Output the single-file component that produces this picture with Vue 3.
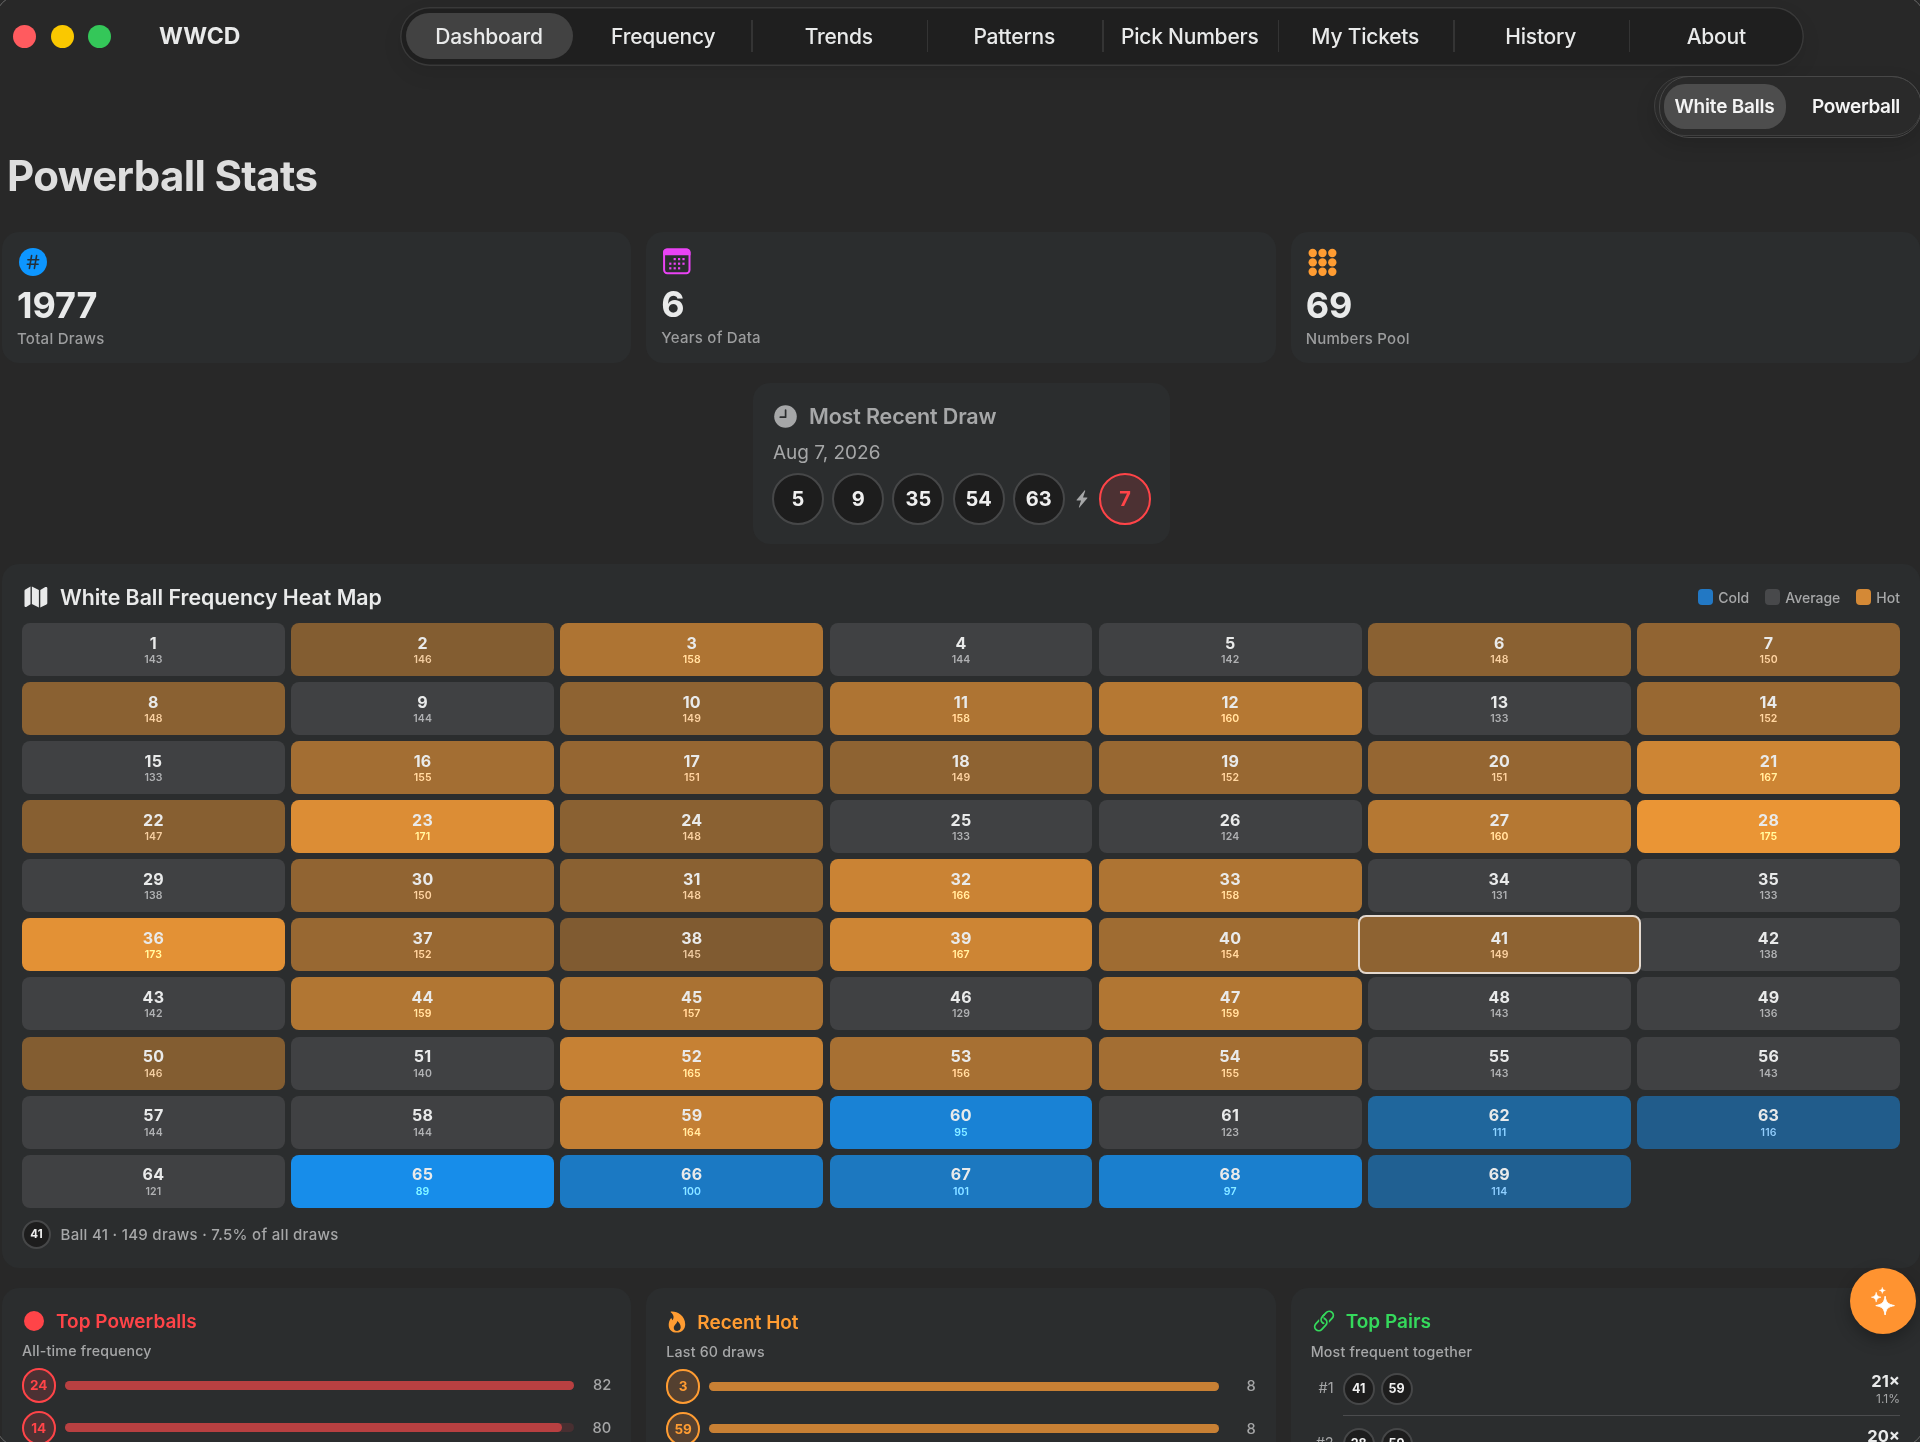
<script setup>
import { computed, ref } from "vue"

const tabs = [
  "Dashboard",
  "Frequency",
  "Trends",
  "Patterns",
  "Pick Numbers",
  "My Tickets",
  "History",
  "About"
]

const activeTab = ref("Dashboard")
const pool = ref("White Balls")
const selected = ref(41)

const totalDraws = 1977
const hotFrom = 145
const coldTo = 116

const cardRgb = [43, 45, 46]
const hotRgb = [255, 160, 54]
const coldRgb = [21, 152, 255]

// draws per white ball, 1 to 69
const counts = [
  143, 146, 158, 144, 142, 148, 150,
  148, 144, 149, 158, 160, 133, 152,
  133, 155, 151, 149, 152, 151, 167,
  147, 171, 148, 133, 124, 160, 175,
  138, 150, 148, 166, 158, 131, 133,
  173, 152, 145, 167, 154, 149, 138,
  142, 159, 157, 129, 159, 143, 136,
  146, 140, 165, 156, 155, 143, 143,
  144, 144, 164, 95, 123, 111, 116,
  121, 89, 100, 101, 97, 114
]

const cells = counts.map((count, i) => ({
  number: i + 1,
  count,
  color: cellColor(count)
}))

function mix(rgb, amount) {
  const parts = rgb.map((value, i) =>
    Math.round(cardRgb[i] + (value - cardRgb[i]) * amount)
  )

  return `rgb(${parts.join(", ")})`
}

function cellColor(count) {
  if (count >= hotFrom) {
    return mix(hotRgb, 0.9 - (175 - count) * 0.0167)
  }

  if (count <= coldTo) {
    return mix(coldRgb, 0.9 - (count - 89) * 0.0169)
  }

  return "#404143"
}

const selectedText = computed(() => {
  const count = counts[selected.value - 1]
  const share = (count / totalDraws * 100).toFixed(1)

  return `Ball ${selected.value} · ${count} draws · ${share}% of all draws`
})

const recentBalls = [5, 9, 35, 54, 63]

const topPowerballs = [
  { number: 24, count: 82 },
  { number: 14, count: 80 }
]

const recentHot = [
  { number: 3, count: 8 },
  { number: 59, count: 8 }
]

const topPairs = [
  { rank: 1, balls: [41, 59], times: 21, share: "1.1%" },
  { rank: 2, balls: [28, 59], times: 20, share: "" }
]
</script>

<template>
  <div class="window">

    <header class="titlebar">
      <div class="lights">
        <span class="light close"></span>
        <span class="light minimize"></span>
        <span class="light zoom"></span>
      </div>

      <div class="app-name">WWCD</div>

      <nav class="tabs">
        <button
          v-for="tab in tabs"
          :key="tab"
          class="tab"
          :class="{ active: tab === activeTab }"
          type="button"
          @click="activeTab = tab"
        >
          <span>{{ tab }}</span>
        </button>
      </nav>
    </header>

    <div class="toolbar">
      <div class="pool-switch">
        <button
          v-for="name in ['White Balls', 'Powerball']"
          :key="name"
          class="pool"
          :class="{ active: name === pool }"
          type="button"
          @click="pool = name"
        >
          {{ name }}
        </button>
      </div>
    </div>

    <h1>Powerball Stats</h1>

    <section class="columns stats">
      <div class="card stat">
        <svg width="28" height="28" viewBox="0 0 28 28">
          <circle cx="14" cy="14" r="14" fill="#0d96ff" />
          <path
            d="M12.6 7.6 10.4 20.4M17.6 7.6l-2.2 12.8M8.9 11.8h10.8M8.3 16.3h10.8"
            fill="none"
            stroke="#24303a"
            stroke-width="1.6"
            stroke-linecap="round"
          />
        </svg>
        <strong>1977</strong>
        <span>Total Draws</span>
      </div>

      <div class="card stat years">
        <svg width="28" height="28" viewBox="0 0 28 28">
          <rect x="1.1" y="2.6" width="25.4" height="23.6" rx="3.2" fill="none" stroke="#ea43f5" stroke-width="2" />
          <path d="M.1 8.200V5.200C.1 2.800 1.900 1.600 4.100 1.600h19.400c2.200 0 4 1.200 4 3.600v3z" fill="#ea43f5" />
          <g fill="#ea43f5">
            <rect x="10.600" y="11" width="2.200" height="2.200" />
            <rect x="15" y="11" width="2.200" height="2.200" />
            <rect x="19.400" y="11" width="2.200" height="2.200" />
            <rect x="6.200" y="15.600" width="2.200" height="2.200" />
            <rect x="10.600" y="15.600" width="2.200" height="2.200" />
            <rect x="15" y="15.600" width="2.200" height="2.200" />
            <rect x="19.400" y="15.600" width="2.200" height="2.200" />
            <rect x="6.200" y="20.200" width="2.200" height="2.200" />
            <rect x="10.600" y="20.200" width="2.200" height="2.200" />
            <rect x="15" y="20.200" width="2.200" height="2.200" />
          </g>
        </svg>
        <strong>6</strong>
        <span>Years of Data</span>
      </div>

      <div class="card stat">
        <svg width="29" height="28" viewBox="0 0 29 28" fill="#ff9c32">
          <template v-for="row in 3" :key="row">
            <circle
              v-for="col in 3"
              :key="col"
              :cx="col * 9.800 - 5.100"
              :cy="row * 9.400 - 4.400"
              r="4.200"
            />
          </template>
        </svg>
        <strong>69</strong>
        <span>Numbers Pool</span>
      </div>
    </section>

    <section class="card recent">
      <div class="recent-title">
        <svg width="23" height="23" viewBox="0 0 23 23">
          <circle cx="11.500" cy="11.500" r="11.300" fill="#a6a7a8" />
          <path d="M11.600 5v7.200H6.300" fill="none" stroke="#2b2d2e" stroke-width="1.700" stroke-linecap="round" stroke-linejoin="round" />
        </svg>
        Most Recent Draw
      </div>
      <div class="recent-date">Aug 7, 2026</div>
      <div class="recent-balls">
        <span v-for="ball in recentBalls" :key="ball" class="ball">{{ ball }}</span>
        <svg class="bolt" width="12" height="18" viewBox="0 0 12 18">
          <path d="M8.600.4.700 9.700c-.3.400-.1.800.4.800h4L2.900 17.400c-.1.500.3.600.6.300l7.900-9.500c.3-.4.100-.8-.4-.8H7.100L9.300.8c.1-.5-.4-.7-.7-.4z" fill="#a6a7a8" />
        </svg>
        <span class="ball power">7</span>
      </div>
    </section>

    <section class="card heat">
      <div class="heat-head">
        <svg width="24" height="22" viewBox="0 0 24 22" fill="#e9eaea">
          <path d="M.5 4.900c0-.7.300-1.200.9-1.500L6.500.6v17.600l-4.300 2.700c-.9.500-1.700.1-1.700-.8z" />
          <path d="m7.900.6 7 3.500v17.300l-7-3.300z" />
          <path d="m16.300 4 5-2.900c1-.5 2-.1 2 1v15c0 .7-.3 1.200-.9 1.500l-6.100 3z" />
        </svg>
        <h2>White Ball Frequency Heat Map</h2>
        <div class="legend">
          <span><i class="cold"></i>Cold</span>
          <span><i class="average"></i>Average</span>
          <span><i class="hot"></i>Hot</span>
        </div>
      </div>

      <div class="heat-grid">
        <div
          v-for="cell in cells"
          :key="cell.number"
          class="cell"
          :class="{ selected: cell.number === selected }"
          :style="{ backgroundColor: cell.color }"
          @click="selected = cell.number"
        >
          <b>{{ cell.number }}</b>
          <small>{{ cell.count }}</small>
        </div>
      </div>

      <div class="heat-foot">
        <span class="ball tiny">{{ selected }}</span>
        {{ selectedText }}
      </div>
    </section>

    <section class="columns lists">
      <div class="card list red">
        <div class="list-title">
          <span class="dot"></span>
          Top Powerballs
        </div>
        <div class="list-sub">All-time frequency</div>
        <div v-for="row in topPowerballs" :key="row.number" class="bar-row">
          <span class="ball power">{{ row.number }}</span>
          <div class="track">
            <div class="fill" :style="{ width: row.count / 82 * 100 + '%' }"></div>
          </div>
          <span class="value">{{ row.count }}</span>
        </div>
      </div>

      <div class="card list orange">
        <div class="list-title">
          <svg width="18" height="22" viewBox="0 0 18 22">
            <path
              fill-rule="evenodd"
              d="M3.300.6C9 .2 17.200 4.600 17.200 13.200c0 5-3.300 8.400-8.300 8.400C4 21.600.7 18.500.7 13.900c0-2.600.9-4.700 2.100-6.300.3-.4.700-.3.900.1l.8 1.600C6.400 6.900 5.700 3.600 3 1.600c-.5-.4-.3-1 .3-1zM9.100 10c.3 2.500-3.300 4-3.300 6.900 0 1.800 1.400 3 3.300 3 2.100 0 3.600-1.400 3.600-3.600 0-2.400-1.400-5-3.600-6.300z"
              fill="#ff9c32"
            />
          </svg>
          Recent Hot
        </div>
        <div class="list-sub">Last 60 draws</div>
        <div v-for="row in recentHot" :key="row.number" class="bar-row">
          <span class="ball warm">{{ row.number }}</span>
          <div class="track">
            <div class="fill" :style="{ width: row.count / 8 * 100 + '%' }"></div>
          </div>
          <span class="value">{{ row.count }}</span>
        </div>
      </div>

      <div class="card list green">
        <div class="list-title">
          <svg width="22" height="22" viewBox="0 0 22 22" fill="none" stroke-width="1.800">
            <defs>
              <clipPath id="link-over">
                <path d="M0 0h22L9.500 12.500 0 22z" />
              </clipPath>
            </defs>
            <g transform="rotate(-47 11 11)">
              <rect x="8.700" y="6.900" width="14" height="8.200" rx="4.100" stroke="#35d95c" />
              <rect x="-.7" y="6.900" width="14" height="8.200" rx="4.100" stroke="#2b2d2e" stroke-width="4.200" />
              <rect x="-.7" y="6.900" width="14" height="8.200" rx="4.100" stroke="#35d95c" />
              <path d="M12.800 6.900c-2.300 0-4.100 1.800-4.100 4.100" stroke="#2b2d2e" stroke-width="4" />
              <path d="M8.700 11c0-2.300 1.800-4.100 4.100-4.100h3" stroke="#35d95c" stroke-linecap="round" />
            </g>
          </svg>
          Top Pairs
        </div>
        <div class="list-sub">Most frequent together</div>
        <div v-for="pair in topPairs" :key="pair.rank" class="pair-row">
          <span class="rank">#{{ pair.rank }}</span>
          <div class="pair-body">
            <span v-for="ball in pair.balls" :key="ball" class="ball">{{ ball }}</span>
            <div class="pair-count">
              <b>{{ pair.times }}×</b>
              <small>{{ pair.share }}</small>
            </div>
          </div>
        </div>
      </div>
    </section>

    <button class="assistant" type="button" aria-label="Assistant">
      <svg width="24" height="29" viewBox="0 0 24 29" fill="#fff">
        <path d="M14.100 9.200c1 6.300 2.700 8 9.300 9.400-6.600 1.300-8.300 3-9.300 9.400-1-6.400-2.700-8.100-9.300-9.400 6.600-1.400 8.300-3.100 9.300-9.400z" stroke="#fff" stroke-width="1" stroke-linejoin="round" />
        <path d="M5.200 5.300c.6 3.300 1.500 4.200 4.800 4.900-3.300.7-4.200 1.600-4.800 4.900C4.600 11.800 3.700 10.900.4 10.200c3.300-.7 4.200-1.600 4.800-4.900z" stroke="#fff" stroke-width=".6" stroke-linejoin="round" />
        <path d="M11.300.3c.4 2.100 1 2.700 3.100 3.100-2.100.4-2.700 1-3.100 3.100-.4-2.100-1-2.700-3.100-3.100 2.100-.4 2.700-1 3.100-3.100z" stroke="#fff" stroke-width=".4" stroke-linejoin="round" />
      </svg>
    </button>

    <div class="window-edge"></div>
  </div>
</template>

<style>
body {
  margin: 0;

  background: #282828;
}
</style>

<style scoped>
.window {
  position: relative;

  width: 1920px;
  height: 1442px;

  overflow: hidden;

  background: #282828;

  color: #e9eaea;

  font-family: Inter, "Liberation Sans", sans-serif;
}

.window * {
  box-sizing: border-box;
}

button {
  padding: 0;

  border: none;

  background: none;

  color: inherit;

  font: inherit;
}

/* TITLEBAR */

.titlebar {
  display: flex;
  align-items: center;

  height: 72px;

  padding-left: 13px;
}

.lights {
  display: flex;

  gap: 14.5px;
}

.light {
  width: 23px;
  height: 23px;

  border-radius: 50%;
}

.light.close {
  background: #ff5b5f;
}

.light.minimize {
  background: #fac800;
}

.light.zoom {
  background: #34c759;
}

.app-name {
  width: 241px;

  margin-left: 48px;

  font-size: 23px;
  font-weight: 680;
}

.tabs {
  display: grid;
  grid-template-columns: repeat(8, minmax(0, 1fr));
  align-items: center;

  width: 1404px;
  height: 59px;

  flex-shrink: 0;

  border-radius: 30px;

  background: #1f1f1f;

  box-shadow:
    inset 0 0 0 1.5px #393939,
    0 8px 20px rgba(0,0,0,0.08);
}

.tab {
  position: relative;

  font-size: 21px;
  font-weight: 520;
  letter-spacing: -0.22px;

  white-space: nowrap;
}

.tab span {
  display: flex;
  align-items: center;
  justify-content: center;

  height: 46px;

  border-radius: 23px;
}

.tab:first-child {
  padding: 0 3px 0 5.5px;
}

.tab.active span {
  background: #424242;
}

.tab:nth-child(n + 3)::before {
  content: "";

  position: absolute;
  top: 7px;
  left: 0;

  width: 1.5px;
  height: 32px;

  background: #343434;
}

/* TOOLBAR */

.toolbar {
  display: flex;
  justify-content: flex-end;

  height: 68px;

  padding-top: 4px;
}

.pool-switch {
  position: relative;

  display: flex;
  align-items: center;

  width: 268px;
  height: 60px;

  margin-right: -2px;
  padding-left: 8.5px;

  flex-shrink: 0;

  border: 1.5px solid #404040;
  border-radius: 30px;

  background: #2a2a2a;

  box-shadow:
    0 8px 20px rgba(0,0,0,0.14);
}

.pool-switch::after {
  content: "";

  position: absolute;
  top: -1.5px;
  left: 4px;

  width: 261px;
  height: 60px;

  border: 1.5px solid #484848;
  border-radius: 30px;

  pointer-events: none;
}

.pool {
  width: 122px;
  height: 45px;

  border-radius: 21px;

  font-size: 19px;
  font-weight: 560;
  letter-spacing: -0.2px;
  color: #f4f4f4;
}

.pool + .pool {
  margin-left: 9.5px;

  letter-spacing: -0.35px;
}

.pool.active {
  background: #4d4d4d;
}

h1 {
  height: 92px;

  margin: 0;
  padding-left: 7px;

  color: #dedede;

  font-size: 42px;
  font-weight: 700;
  line-height: 72px;
  letter-spacing: -0.65px;
}

/* CARDS */

.card {
  border-radius: 17px;

  background: #2b2d2e;
}

.columns {
  display: grid;
  grid-template-columns: repeat(3, minmax(0, 1fr));

  gap: 15px;

  padding: 0 0 0 2px;
}

.stat {
  display: flex;
  flex-direction: column;

  height: 131px;

  padding: 16px 15px 0;
}

.stat.years {
  padding-top: 15px;
}

.stat svg {
  flex-shrink: 0;

  margin-left: 2px;
}

.stat strong {
  margin-top: 7px;

  font-size: 36px;
  font-weight: 700;
  line-height: 44px;
  letter-spacing: -0.1px;
}

.stat span {
  margin-top: 3px;

  color: #9c9d9e;

  font-size: 15px;
  font-weight: 500;
  line-height: 18px;
  letter-spacing: 0.25px;
}

.recent {
  width: 417px;
  height: 161px;

  margin: 20px 0 0 753px;
  padding: 17px 19px;
}

.recent-title {
  display: flex;
  align-items: center;

  gap: 12px;

  height: 32px;

  padding-left: 2px;

  color: #a6a7a8;

  font-size: 21.5px;
  font-weight: 620;
  letter-spacing: -0.15px;
}

.recent-date {
  padding: 1px 0 0 1px;

  color: #a6a7a8;

  font-size: 19px;
  font-weight: 420;
  line-height: 40px;
}

.recent-balls {
  display: flex;
  align-items: center;

  gap: 8.2px;
}

.ball {
  display: flex;
  align-items: center;
  justify-content: center;

  width: 52px;
  height: 52px;

  flex-shrink: 0;

  border: 2px solid #464748;
  border-radius: 50%;

  background: #1d1d1d;

  color: #efefef;

  font-size: 20px;
  font-weight: 720;
}

.ball.power {
  border-color: #ff4448;

  background: #4c3133;

  color: #ff4448;
}

.ball.warm {
  border-color: #ff9c32;

  background: #544030;

  color: #ff9c32;
}

.bolt {
  margin: 0 3px;
}

/* HEAT MAP */

.heat {
  height: 704px;

  margin: 20px 0 0 2px;
  padding: 18px 20px 0;
}

.heat-head {
  display: flex;
  align-items: center;

  height: 30px;

  padding-left: 2px;
}

.heat-head h2 {
  margin: 0 0 0 12px;

  font-size: 21.3px;
  font-weight: 630;
}

.legend {
  display: flex;

  gap: 16px;

  margin-left: auto;

  color: #a6a7a8;

  font-size: 14px;
  font-weight: 520;
}

.legend span {
  display: flex;
  align-items: center;

  gap: 5px;
}

.legend i {
  width: 15px;
  height: 15.5px;

  border-radius: 4px;
}

.legend .cold {
  background: #2278c4;
}

.legend .average {
  background: #48494b;
}

.legend .hot {
  background: #d48936;
}

.heat-grid {
  display: grid;
  grid-template-columns: repeat(7, minmax(0, 1fr));
  grid-auto-rows: 53px;

  gap: 6.08px 6.3px;

  margin-top: 11px;
}

.cell {
  display: flex;
  flex-direction: column;
  align-items: center;

  padding-top: 9.5px;

  border-radius: 8px;
}

.cell b {
  font-size: 16px;
  font-weight: 700;
  line-height: 20px;
  letter-spacing: 0.3px;
}

.cell small {
  margin-top: 0.5px;

  color: rgb(112,112,112);

  font-size: 10.5px;
  font-weight: 600;
  line-height: 13px;
  letter-spacing: 0.1px;

  mix-blend-mode: plus-lighter;
}

.cell.selected {
  z-index: 1;

  margin: -3px -10px;
  padding-top: 10.5px;

  border: 2px solid #e4d9cf;
}

.heat-foot {
  display: flex;
  align-items: center;

  gap: 9.5px;

  margin-top: 12px;

  color: #a6a7a8;

  font-size: 15px;
  font-weight: 500;
  letter-spacing: 0.3px;
}

.ball.tiny {
  width: 29px;
  height: 29px;

  font-size: 11.5px;
  letter-spacing: 0;
}

/* LISTS */

.lists {
  margin-top: 20px;
}

.list {
  height: 300px;

  padding: 18px 20px;
}

.list-title {
  display: flex;
  align-items: center;

  height: 30px;

  padding-left: 2px;

  font-size: 19px;
  font-weight: 640;
}

.list-title svg {
  margin-right: 11px;
}

.dot {
  width: 20px;
  height: 20px;

  margin-right: 12px;

  border-radius: 50%;

  background: #ff4448;
}

.red .list-title {
  color: #ff4448;
}

.orange .list-title {
  color: #ff9c32;
}

.green .list-title {
  color: #35d95c;
}

.orange .list-title {
  margin-top: 1px;
}

.green .list-sub {
  margin-top: 1px;
}

.list-sub {
  margin-bottom: 6px;

  color: #a6a7a8;

  font-size: 14.2px;
  font-weight: 450;
  line-height: 29px;
  letter-spacing: 0.2px;
}

.bar-row {
  display: flex;
  align-items: center;

  height: 34.5px;

  margin: -3px 0 11.2px -0.5px;
}

.bar-row .ball {
  width: 34.5px;
  height: 34.5px;

  font-size: 13.5px;
}

.track {
  flex: 1;

  height: 9px;

  margin-left: 9px;

  border-radius: 4.5px;
}

.fill {
  height: 100%;

  border-radius: 4.5px;
}

.red .track {
  background: #482f31;
}

.red .fill {
  background: #b84041;
}

.orange .track {
  background: #544030;
}

.orange .fill {
  background: #c88034;
}

.value {
  width: 37px;

  color: #a6a7a8;

  font-size: 14.7px;
  font-weight: 450;
  text-align: right;
}

.pair-row {
  display: flex;

  height: 55px;
}

.rank {
  width: 32px;

  padding: 7px 9px 0 0;

  color: #a6a7a8;

  font-size: 14.5px;
  text-align: right;
}

.pair-body {
  display: flex;
  align-items: center;

  flex: 1;

  height: 50px;

  gap: 6px;

  margin-top: -6px;
  padding-bottom: 4px;

  border-bottom: 1.5px solid #4b4c4e;
}

.pair-row .ball {
  width: 32px;
  height: 32px;

  font-size: 12.5px;
}

.pair-count {
  display: flex;
  flex-direction: column;
  align-items: flex-end;

  margin-left: auto;
}

.pair-count b {
  font-size: 16.5px;
  font-weight: 680;
  line-height: 19px;
}

.pair-count small {
  height: 15px;

  color: #a6a7a8;

  font-size: 12px;
  line-height: 15px;
}

.assistant {
  position: absolute;
  right: 4.5px;
  bottom: 108px;

  display: flex;
  align-items: center;
  justify-content: center;

  width: 66px;
  height: 66px;

  border-radius: 50%;

  background: #ff9330;

  box-shadow:
    0 6px 16px rgba(0,0,0,0.28);
}

.window-edge {
  position: absolute;
  inset: -6px;

  border: 1.5px solid #6a6a6a;
  border-radius: 28px;

  pointer-events: none;
}
</style>
